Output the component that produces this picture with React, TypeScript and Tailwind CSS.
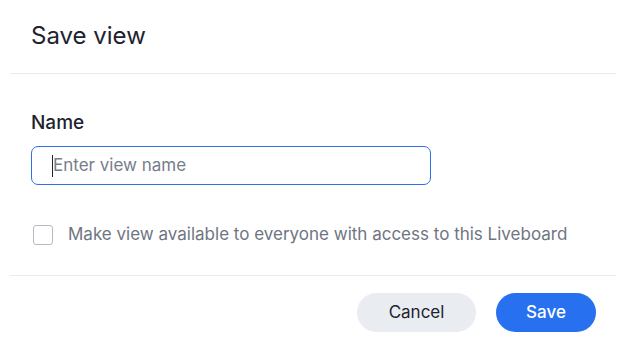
import React from 'react';

export default function App() {
  return (
    <div className="w-[626px] h-[349px] bg-white font-['Inter',sans-serif] text-[#1d232f] overflow-hidden">
      {/* Header */}
      <div className="h-[74px] mx-[10px] border-b border-[#e9ebef] flex items-center px-[21px]">
        <h2 className="text-[24px] leading-none pb-[2px]">Save view</h2>
      </div>

      {/* Body */}
      <div className="h-[202px] mx-[10px] border-b border-[#e9ebef] px-[21px] pt-[37px]">
        <label className="block text-[19px] font-medium leading-[24px]">Name</label>
        <div className="mt-[11px] w-[400px] h-[39px] rounded-[7px] border border-[#2f6fe8] flex items-center px-[20px]">
          <span className="w-px h-[22px] bg-[#1d232f]" />
          <span className="text-[17px] text-[#777e8b]">Enter view name</span>
        </div>
        <div className="mt-[37px] flex items-center gap-[15px] pl-[2px]">
          <span className="w-[20px] h-[20px] rounded-[3px] border border-[#b4b9c2] bg-white" />
          <span className="text-[17px] text-[#6e7582]">Make view available to everyone with access to this Liveboard</span>
        </div>
      </div>

      {/* Footer */}
      <div className="flex justify-end gap-[20px] pr-[30px] pt-[17px]">
        <button className="w-[119px] h-[39px] rounded-full bg-[#e9ecf1] text-[17px] text-[#1d232f]">Cancel</button>
        <button className="w-[100px] h-[39px] rounded-full bg-[#2770ef] text-[17px] font-medium text-white">Save</button>
      </div>
    </div>
  );
}
